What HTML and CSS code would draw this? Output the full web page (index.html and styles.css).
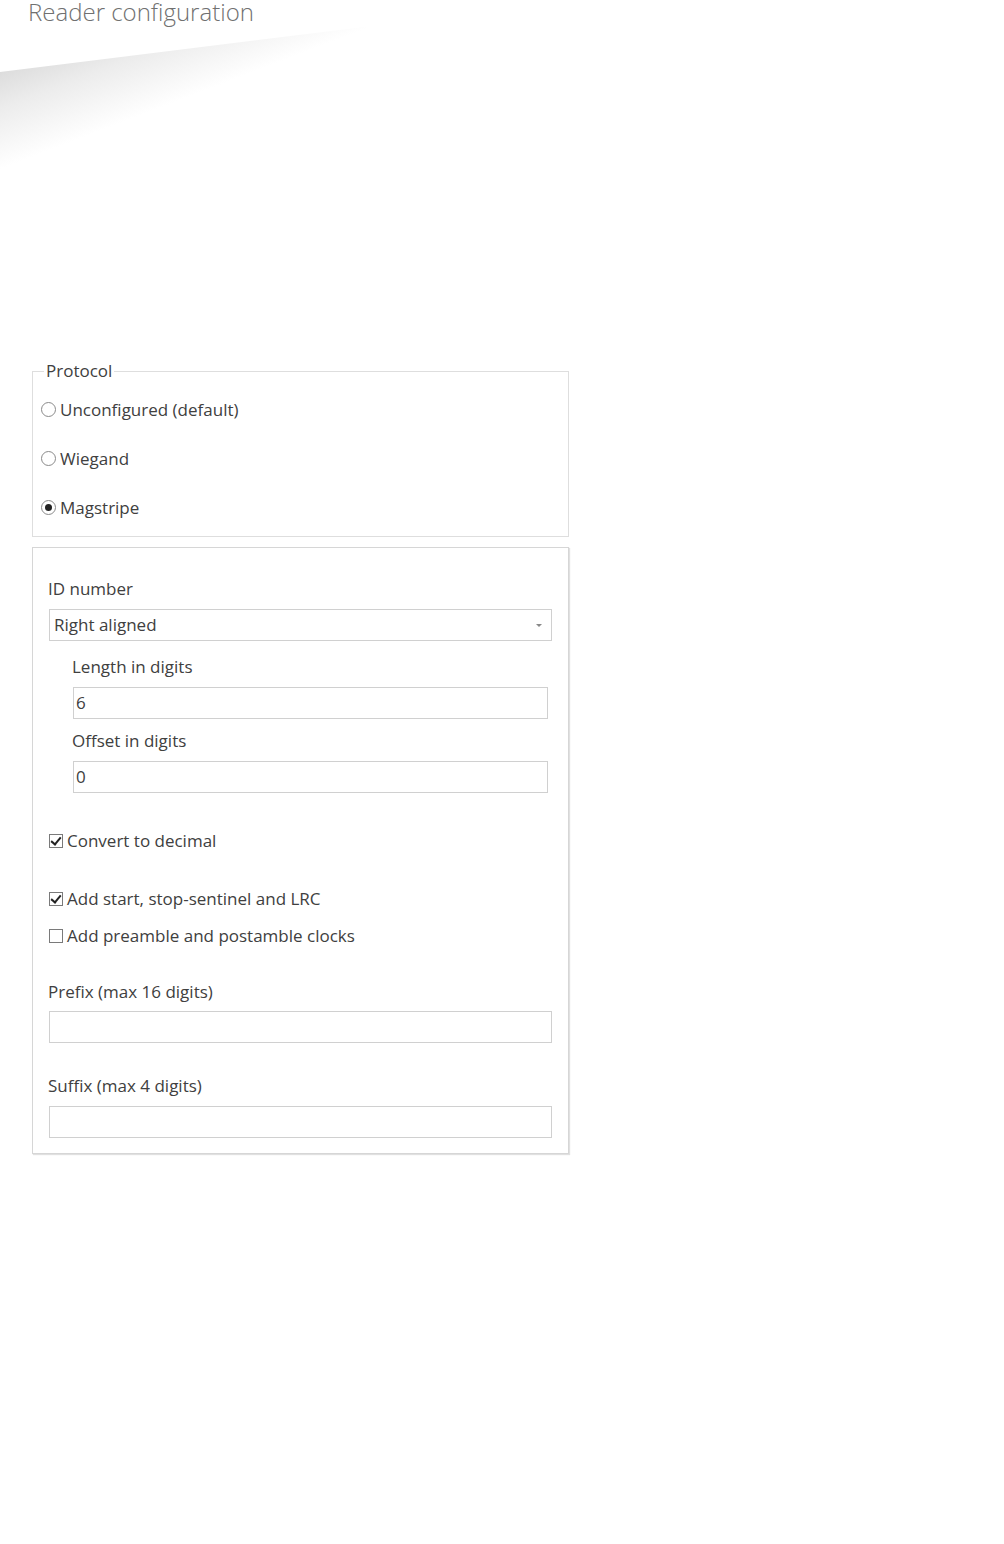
FILE: index.html
```html
<!DOCTYPE html>
<html>
<head>
<meta charset="utf-8">
<link rel="stylesheet" href="styles.css">
</head>
<body>
<header class="header">
  <div class="wedge"></div>
  <h1 class="title">Reader configuration</h1>
</header>
<main class="main">
  <fieldset class="protocol">
    <legend class="legend">Protocol</legend>
    <label class="radio-row"><span class="radio"></span><span>Unconfigured (default)</span></label>
    <label class="radio-row"><span class="radio"></span><span>Wiegand</span></label>
    <label class="radio-row"><span class="radio checked"></span><span>Magstripe</span></label>
  </fieldset>
  <section class="box">
    <div class="label first">ID number</div>
    <div class="select"><span>Right aligned</span><span class="caret"></span></div>
    <div class="nested">
      <div class="label gap16">Length in digits</div>
      <div class="input">6</div>
      <div class="label gap12">Offset in digits</div>
      <div class="input">0</div>
    </div>
    <label class="check-row gap38"><span class="check checked"></span><span>Convert to decimal</span></label>
    <label class="check-row gap38"><span class="check checked"></span><span>Add start, stop-sentinel and LRC</span></label>
    <label class="check-row gap17"><span class="check"></span><span>Add preamble and postamble clocks</span></label>
    <div class="label gap36">Prefix (max 16 digits)</div>
    <div class="input tight"></div>
    <div class="label gap33">Suffix (max 4 digits)</div>
    <div class="input"></div>
  </section>
</main>
</body>
</html>
```
FILE: styles.css
```css
html, body {
  margin: 0;
  padding: 0;
  background: #fff;
}
body {
  font-family: "Open Sans", "Noto Sans", sans-serif;
  font-size: 17px;
  color: #404040;
  width: 1004px;
  height: 1544px;
  overflow: hidden;
}
.header {
  position: relative;
  height: 361px;
}
.wedge {
  position: absolute;
  left: 0;
  top: 0;
  width: 400px;
  height: 185px;
  clip-path: polygon(0 72px, 380px 25px, 400px 185px, 0 185px);
  background: linear-gradient(159deg, #d8d8d8 18%, #ececec 32%, #ffffff 50%);
}
.title {
  position: relative;
  margin: 0;
  padding-left: 28px;
  font-size: 24px;
  line-height: 24px;
  font-weight: 300;
  color: #707070;
}
.main {
  padding-left: 32px;
  width: 537px;
}
.protocol {
  margin: 0;
  border: 1px solid #dedede;
  padding: 0 8px 4px 8px;
}
.legend {
  padding: 0 2px;
  margin-left: 3px;
  line-height: 20px;
}
.radio-row {
  display: flex;
  align-items: center;
  height: 49px;
  gap: 4px;
  line-height: 20px;
}
.radio-row:first-of-type {
  margin-top: 4px;
}
.radio {
  width: 13px;
  height: 13px;
  border: 1px solid #8a8a8a;
  border-radius: 50%;
  background: #fff;
  display: flex;
  align-items: center;
  justify-content: center;
  flex: none;
}
.radio.checked::after {
  content: "";
  width: 7px;
  height: 7px;
  border-radius: 50%;
  background: #222;
}
.box {
  margin-top: 10px;
  border: 1px solid #d6d6d6;
  box-shadow: 1px 1px 1px rgba(0,0,0,0.12);
  padding: 31px 16px 15px 16px;
  display: flex;
  flex-direction: column;
}
.label {
  line-height: 20px;
  margin-left: -1px;
}
.first { margin-top: 0; }
.gap16 { margin-top: 16px; }
.gap12 { margin-top: 12px; }
.gap38 { margin-top: 38px; }
.gap17 { margin-top: 17px; }
.gap36 { margin-top: 36px; }
.gap33 { margin-top: 33px; }
.select, .input {
  box-sizing: border-box;
  height: 32px;
  border: 1px solid #d0d0d0;
  margin-top: 10px;
  display: flex;
  align-items: center;
  padding: 0 4px;
  line-height: 20px;
  background: #fff;
}
.input {
  padding: 0 2px;
}
.input.tight { margin-top: 9px; }
.select {
  justify-content: space-between;
  padding-right: 9px;
}
.caret {
  width: 0;
  height: 0;
  border-left: 3px solid transparent;
  border-right: 3px solid transparent;
  border-top: 3px solid #888;
}
.nested {
  display: flex;
  flex-direction: column;
  padding-left: 24px;
  padding-right: 4px;
}
.check-row {
  display: flex;
  align-items: center;
  gap: 4px;
  line-height: 20px;
}
.check {
  box-sizing: border-box;
  width: 14px;
  height: 14px;
  border: 1px solid #7a7a7a;
  background: #fff;
  flex: none;
  position: relative;
}
.check.checked::after {
  content: "";
  position: absolute;
  left: 3px;
  top: 0px;
  width: 4px;
  height: 8px;
  border: solid #222;
  border-width: 0 2px 2px 0;
  transform: rotate(40deg);
}
```
